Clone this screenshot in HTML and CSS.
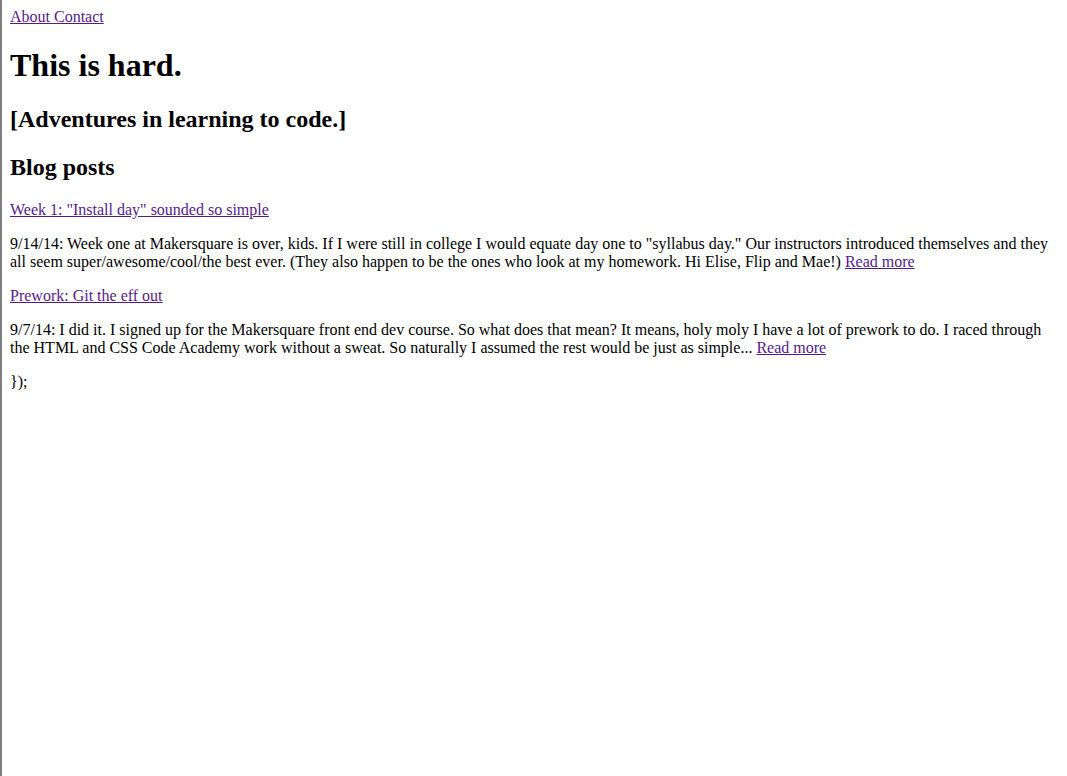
FILE: index.html
```html
<!DOCTYPE html>
<html>
<head>
<meta charset="utf-8">
<title>This is hard.</title>
<link rel="stylesheet" href="styles.css">
</head>
<body class="page">
<nav class="nav"><a class="link" href="#">About Contact</a></nav>
<h1 class="title">This is hard.</h1>
<h2 class="subtitle">[Adventures in learning to code.]</h2>
<h2 class="section">Blog posts</h2>
<p class="post-title"><a class="link" href="#">Week 1: "Install day" sounded so simple</a></p>
<p class="post-body">9/14/14: Week one at Makersquare is over, kids. If I were still in college I would equate day one to "syllabus day." Our instructors introduced themselves and they all seem super/awesome/cool/the best ever. (They also happen to be the ones who look at my homework. Hi Elise, Flip and Mae!) <a class="link" href="#">Read more</a></p>
<p class="post-title"><a class="link" href="#">Prework: Git the eff out</a></p>
<p class="post-body">9/7/14: I did it. I signed up for the Makersquare front end dev course. So what does that mean? It means, holy moly I have a lot of prework to do. I raced through the HTML and CSS Code Academy work without a sweat. So naturally I assumed the rest would be just as simple... <a class="link" href="#">Read more</a></p>
<p class="post-body">});</p>
</body>
</html>
```
FILE: styles.css
```css
html {
  border-left: 2px solid #7d7d7d;
  min-height: 100vh;
  box-sizing: border-box;
  background: #fff;
}
.page {
  margin: 8px;
  font-family: "Liberation Serif", "Times New Roman", serif;
  font-size: 16px;
  color: #000;
}
.link {
  color: #551a8b;
  text-decoration: underline;
}
.title {
  font-size: 32px;
  margin: 21.44px 0;
}
.subtitle {
  font-size: 24px;
  margin: 19.92px 0;
}
.section {
  font-size: 24px;
  margin: 21px 0 19.92px;
}
.post-title,
.post-body {
  margin: 16px 0;
}
```
